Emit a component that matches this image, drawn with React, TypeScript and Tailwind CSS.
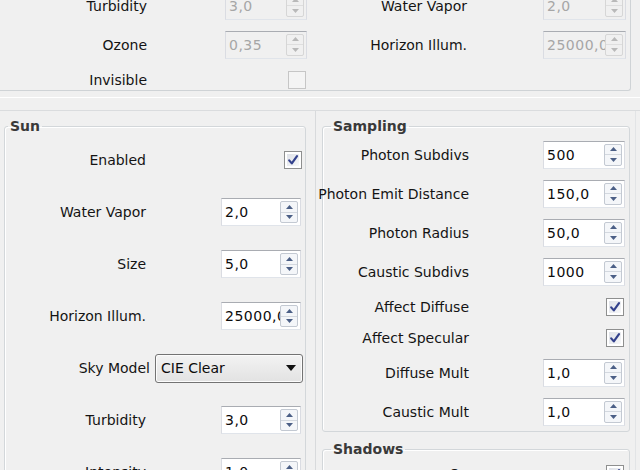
import clsx from "clsx";

const frame =
  "rounded-[3px] border border-[#d3d7da] shadow-[inset_1px_1px_0_#ffffff]";

function Arrow({ up, disabled }: { up?: boolean; disabled?: boolean }) {
  return (
    <svg width="7" height="4" viewBox="0 0 7 4">
      <polygon
        points={up ? "0,4 3.5,0 7,4" : "0,0 7,0 3.5,4"}
        fill={disabled ? "#b9b9b9" : "#4b5f86"}
      />
    </svg>
  );
}

function SpinBox({
  value,
  className,
  disabled = false,
}: {
  value: string;
  className: string;
  disabled?: boolean;
}) {
  return (
    <div
      className={clsx(
        "flex h-[28px] shrink-0 items-center border border-x-[#dadce2] border-t-[#a9acb2] border-b-[#e0e4ea]",
        disabled ? "bg-[#f0f0f0]" : "bg-white",
        className
      )}
    >
      <span
        className={clsx(
          "min-w-0 flex-1 overflow-hidden whitespace-nowrap pl-[3px] text-[14px] leading-none tracking-[0.5px]",
          disabled ? "text-[#a6a6a6]" : "text-[#0c0c0c]"
        )}
      >
        {value}
      </span>
      <div
        className={clsx(
          "mr-[2px] flex h-[22px] w-[18px] shrink-0 flex-col rounded-[2px] border",
          disabled ? "border-[#d6d6d6] bg-[#f0f0f0]" : "border-[#c3c9d2] bg-[#f4f6f9]"
        )}
      >
        <div
          className={clsx(
            "flex flex-1 items-center justify-center border-b",
            disabled ? "border-[#dedede]" : "border-[#d3d8df]"
          )}
        >
          <Arrow up disabled={disabled} />
        </div>
        <div className="flex flex-1 items-center justify-center">
          <Arrow disabled={disabled} />
        </div>
      </div>
    </div>
  );
}

function CheckBox({ checked = false, disabled = false }: { checked?: boolean; disabled?: boolean }) {
  return (
    <div
      className={clsx(
        "flex h-[18px] w-[18px] shrink-0 items-center justify-center border p-[2px]",
        disabled ? "border-[#c6c6c6] bg-[#f4f4f4]" : "border-[#8e8f8f] bg-white"
      )}
    >
      <div
        className={clsx(
          "flex h-full w-full items-center justify-center",
          disabled ? "bg-[#f4f4f4]" : "bg-gradient-to-br from-[#dfe2e8] to-[#f6f7f9]"
        )}
      >
        {checked && (
          <svg width="12" height="12" viewBox="0 0 12 12">
            <path
              d="M2.2 6.4 L4.8 9.4 L10 2.2"
              fill="none"
              stroke="#33418c"
              strokeWidth="2.2"
              strokeLinecap="round"
              strokeLinejoin="round"
            />
          </svg>
        )}
      </div>
    </div>
  );
}

function Combo({ value }: { value: string }) {
  return (
    <div className="flex h-[29px] w-[148px] shrink-0 items-center justify-between rounded-[3px] border border-[#737373] bg-gradient-to-b from-[#f3f3f3] to-[#e2e2e2] pl-[5px] pr-[6px] shadow-[inset_0_0_0_1px_#fcfcfc]">
      <span className="text-[14px] leading-none text-[#0c0c0c]">{value}</span>
      <svg width="10" height="6" viewBox="0 0 10 6">
        <polygon points="0,0 10,0 5,6" fill="#111" />
      </svg>
    </div>
  );
}

// label column + right-aligned field, used everywhere
function Row({
  label,
  labelW,
  h,
  pr,
  children,
}: {
  label: string;
  labelW: string;
  h: string;
  pr: string;
  children: React.ReactNode;
}) {
  return (
    <div className={clsx("flex items-center", h)}>
      <div className={clsx("flex shrink-0 justify-end", labelW)}>
        <span className="shrink-0 whitespace-nowrap text-[14px] leading-none text-[#141414]">
          {label}
        </span>
      </div>
      <div className={clsx("flex flex-1 justify-end", pr)}>{children}</div>
    </div>
  );
}

function Legend({ children, ml }: { children: React.ReactNode; ml: string }) {
  return (
    <legend className={clsx("px-[2px] text-[14px] font-bold leading-[18px] text-[#3a3a3a]", ml)}>
      {children}
    </legend>
  );
}

export default function App() {
  return (
    <div className="h-[470px] w-[640px] overflow-hidden bg-[#f0f0f0] font-['DejaVu_Sans',Verdana,sans-serif]">
      {/* disabled sky block, scrolled partly out of view */}
      <div className="-mt-[14px] w-[631px] rounded-br-[3px] border-r border-b border-[#cfd3d6]">
        <div className="grid grid-cols-[320px_1fr]">
          <Row label="Turbidity" labelW="w-[147px]" h="h-[39px]" pr="pr-[13px]">
            <SpinBox value="3,0" className="w-[82px]" disabled />
          </Row>
          <Row label="Water Vapor" labelW="w-[147px]" h="h-[39px]" pr="pr-[4px]">
            <SpinBox value="2,0" className="w-[83px]" disabled />
          </Row>
          <Row label="Ozone" labelW="w-[147px]" h="h-[39px]" pr="pr-[13px]">
            <SpinBox value="0,35" className="w-[82px]" disabled />
          </Row>
          <Row label="Horizon Illum." labelW="w-[147px]" h="h-[39px]" pr="pr-[4px]">
            <SpinBox value="25000,0" className="w-[83px]" disabled />
          </Row>
          <Row label="Invisible" labelW="w-[147px]" h="h-[26px] pt-[6px]" pr="pr-[14px]">
            <CheckBox disabled />
          </Row>
          <div />
        </div>
      </div>

      <div className="mt-[6px] h-px bg-white" />

      <div className="mt-[12px] flex border-t border-[#dadcde]">
        {/* left column */}
        <div className="w-[316px] shrink-0 border-r border-[#d8dadc] pt-[6px]">
          <fieldset className={clsx("ml-[4px] h-[400px] w-[302px] min-w-0 px-0 pb-0", frame)}>
            <Legend ml="ml-[3px]">Sun</Legend>
            <div className="-mt-[1px]">
              <Row label="Enabled" labelW="w-[141px]" h="h-[52px]" pr="pr-[3px]">
                <CheckBox checked />
              </Row>
              <Row label="Water Vapor" labelW="w-[141px]" h="h-[52px]" pr="pr-[4px]">
                <SpinBox value="2,0" className="w-[80px]" />
              </Row>
              <Row label="Size" labelW="w-[141px]" h="h-[52px]" pr="pr-[4px]">
                <SpinBox value="5,0" className="w-[80px]" />
              </Row>
              <Row label="Horizon Illum." labelW="w-[141px]" h="h-[52px]" pr="pr-[4px]">
                <SpinBox value="25000,0" className="w-[80px]" />
              </Row>
              <div className="flex h-[52px] items-center gap-[5px] pr-[2px]">
                <span className="flex-1 text-right text-[14px] leading-none text-[#141414]">
                  Sky Model
                </span>
                <Combo value="CIE Clear" />
              </div>
              <Row label="Turbidity" labelW="w-[141px]" h="h-[52px]" pr="pr-[4px]">
                <SpinBox value="3,0" className="w-[80px]" />
              </Row>
              <Row label="Intensity" labelW="w-[141px]" h="h-[52px]" pr="pr-[4px]">
                <SpinBox value="1,0" className="w-[80px]" />
              </Row>
            </div>
          </fieldset>
        </div>

        {/* right column */}
        <div className="w-[320px] shrink-0 border-r border-[#e2e4e6] pt-[6px]">
          <fieldset className={clsx("ml-[6px] w-[308px] min-w-0 px-0 pb-0", frame)}>
            <Legend ml="ml-[8px]">Sampling</Legend>
            <Row label="Photon Subdivs" labelW="w-[146px]" h="h-[39px]" pr="pr-[4px]">
              <SpinBox value="500" className="w-[82px]" />
            </Row>
            <Row label="Photon Emit Distance" labelW="w-[146px]" h="h-[39px]" pr="pr-[4px]">
              <SpinBox value="150,0" className="w-[82px]" />
            </Row>
            <Row label="Photon Radius" labelW="w-[146px]" h="h-[39px]" pr="pr-[4px]">
              <SpinBox value="50,0" className="w-[82px]" />
            </Row>
            <Row label="Caustic Subdivs" labelW="w-[146px]" h="h-[39px]" pr="pr-[4px]">
              <SpinBox value="1000" className="w-[82px]" />
            </Row>
            <Row label="Affect Diffuse" labelW="w-[146px]" h="h-[31px]" pr="pr-[5px]">
              <CheckBox checked />
            </Row>
            <Row label="Affect Specular" labelW="w-[146px]" h="h-[31px]" pr="pr-[5px]">
              <CheckBox checked />
            </Row>
            <Row label="Diffuse Mult" labelW="w-[146px]" h="h-[39px]" pr="pr-[4px]">
              <SpinBox value="1,0" className="w-[82px]" />
            </Row>
            <Row label="Caustic Mult" labelW="w-[146px]" h="h-[39px]" pr="pr-[4px]">
              <SpinBox value="1,0" className="w-[82px]" />
            </Row>
          </fieldset>

          <fieldset className={clsx("ml-[6px] mt-[8px] w-[308px] min-w-0 px-0 pb-0", frame)}>
            <Legend ml="ml-[8px]">Shadows</Legend>
            <Row label="On" labelW="w-[146px]" h="h-[31px]" pr="pr-[5px]">
              <CheckBox checked />
            </Row>
          </fieldset>
        </div>
      </div>
    </div>
  );
}
